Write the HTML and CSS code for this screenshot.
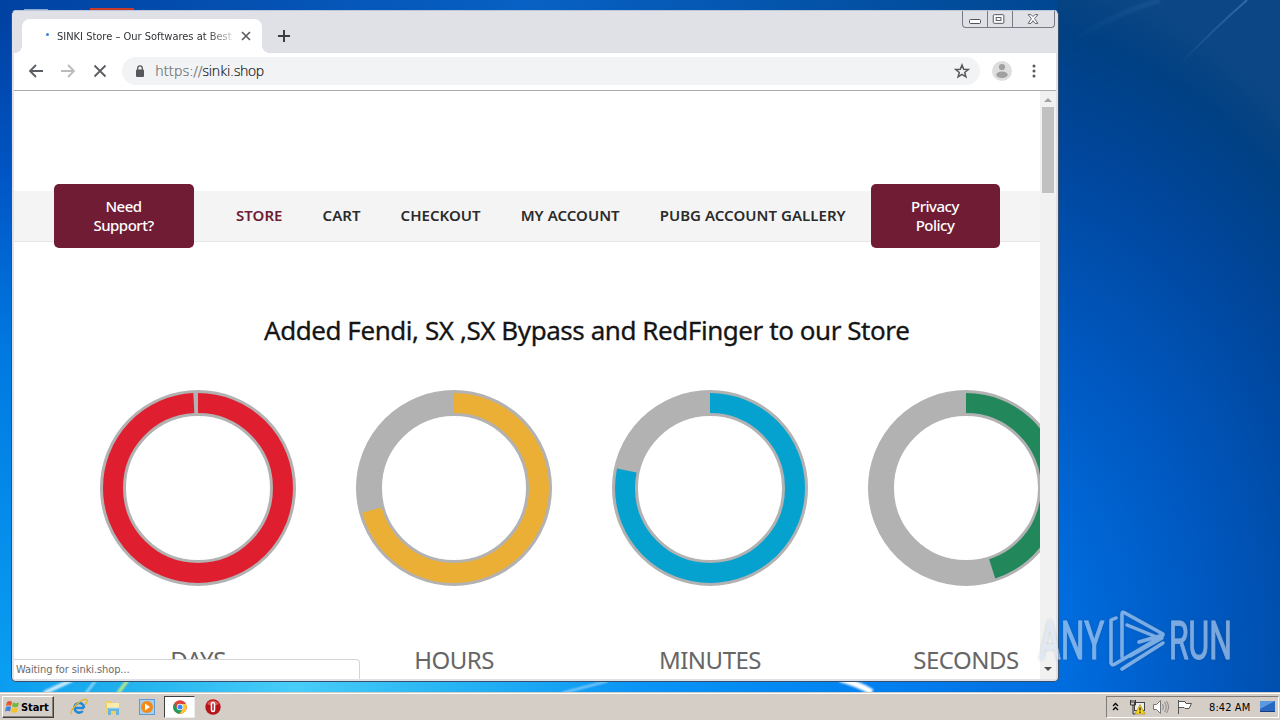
FILE: index.html
```html
<!DOCTYPE html>
<html lang="en">
<head>
  <meta charset="UTF-8">
  <title>SINKI Store – Our Softwares at Best</title>
  <link rel="stylesheet" href="styles.css">
</head>
<body>
  <div class="desktop">
    <svg class="wallpaper" width="1280" height="692" viewBox="0 0 1280 692">
      <defs>
        <linearGradient id="left" x1="0" y1="0" x2="0" y2="1">
          <stop offset="0" stop-color="#003f9f"/>
          <stop offset=".25" stop-color="#0055c4"/>
          <stop offset=".5" stop-color="#0078e0"/>
          <stop offset="1" stop-color="#0aa0f4"/>
        </linearGradient>
        <radialGradient id="right" gradientUnits="userSpaceOnUse" cx="0" cy="0" r="1" gradientTransform="translate(960 650) scale(520 690)">
          <stop offset="0" stop-color="#0080f2"/>
          <stop offset=".2" stop-color="#006ddf"/>
          <stop offset=".48" stop-color="#0058c0"/>
          <stop offset=".75" stop-color="#00469c"/>
          <stop offset=".92" stop-color="#004083"/>
          <stop offset="1.000" stop-color="#0c4684"/>
        </radialGradient>
        <linearGradient id="top">
          <stop offset="0" stop-color="#0042a2"/>
          <stop offset=".5" stop-color="#0861c4"/>
          <stop offset="1" stop-color="#004792"/>
        </linearGradient>
        <linearGradient id="bottom">
          <stop offset="0" stop-color="#0a9cf0"/>
          <stop offset=".12" stop-color="#22b2ee"/>
          <stop offset=".28" stop-color="#48cdf8"/>
          <stop offset=".42" stop-color="#28b5f3"/>
          <stop offset=".6" stop-color="#0a95f6"/>
          <stop offset=".83" stop-color="#0080f0"/>
          <stop offset="1" stop-color="#006ddf"/>
        </linearGradient>
        <linearGradient id="fade" x1="0" x2="1">
          <stop offset="0" stop-color="#5b9bd8" stop-opacity="0"/>
          <stop offset="1" stop-color="#5b9bd8" stop-opacity=".45"/>
        </linearGradient>
        <filter id="soft"><feGaussianBlur stdDeviation="1"/></filter>
      </defs>
      <rect width="1280" height="692" fill="url(#right)"/>
      <rect width="20" height="692" fill="url(#left)"/>
      <rect width="1058" height="12" fill="url(#top)"/>
      <rect y="680" width="1058" height="12" fill="url(#bottom)"/>
      <path d="M1180 64Q1215 28 1247 0" stroke="url(#fade)" stroke-width="2" fill="none"/>
      <path d="M1060 48Q1110 15 1160 0" stroke="url(#fade)" stroke-width="6" opacity=".3" fill="none" filter="url(#soft)"/>
      <g fill="none" stroke="#fff" filter="url(#soft)">
        <path d="M44 693l28-13" stroke-width="4" opacity=".8"/>
        <path d="M86 693l10-13" stroke-width="2" opacity=".7"/>
        <path d="M118 693l10-13" stroke="#c9ec7c" stroke-width="3"/>
        <path d="M562 693l46-12" stroke-width="1.5" opacity=".7"/>
        <path d="M840 679q16 4 32 13" stroke-width="6"/>
      </g>
      <rect x="90" y="8" width="44" height="3" fill="#c93a2b"/>
      <rect x="24" y="9" width="24" height="1" fill="#8ca9cf"/>
    </svg>

    <div class="window">
      <div class="tabstrip">
        <div class="tab">
          <span class="spinner"></span>
          <span class="tab-title">SINKI Store – Our Softwares at Best</span>
          <svg width="10" height="10" viewBox="0 0 10 10"><path d="M1 1l8 8M9 1l-8 8" stroke="#5a5d61" stroke-width="1.7"/></svg>
        </div>
        <svg class="new-tab" width="12" height="12" viewBox="0 0 12 12"><path d="M6 0v12M0 6h12" stroke="#3a3d41" stroke-width="2"/></svg>
        <div class="controls">
          <svg width="24" height="16" viewBox="0 0 24 16"><rect x="6.500" y="8.500" width="11" height="4" rx="1" fill="#fff" stroke="#50525c"/></svg>
          <svg width="25" height="16" viewBox="0 0 25 16"><rect x="5.500" y="3.500" width="11" height="9" rx="1" fill="#fff" stroke="#50525c"/><rect x="8.500" y="6.500" width="5" height="3" fill="none" stroke="#50525c"/></svg>
          <svg width="42" height="16" viewBox="0 0 42 16"><path d="M15.500 3.500h3l2 2 2-2h3l-3.400 4.200 3.400 4.800h-3l-2-2.800-2 2.800h-3l3.400-4.800z" fill="#fff" stroke="#62646d" stroke-width="1"/></svg>
        </div>
      </div>

      <div class="toolbar">
        <svg width="16" height="16" viewBox="0 0 16 16"><path d="M15 8H2M8 2L2 8l6 6" fill="none" stroke="#5a5d61" stroke-width="1.8"/></svg>
        <svg width="16" height="16" viewBox="0 0 16 16"><path d="M1 8h13M8 2l6 6-6 6" fill="none" stroke="#babbbd" stroke-width="1.800"/></svg>
        <svg width="16" height="16" viewBox="0 0 16 16"><path d="M2.500 2.500l11 11M13.500 2.500l-11 11" stroke="#5a5d61" stroke-width="1.800"/></svg>
        <div class="omnibox">
          <svg width="10" height="13" viewBox="0 0 10 13"><rect x="1" y="4.500" width="8" height="7.500" rx="1" fill="#55585c"/><path d="M2.700 5V3.200a2.300 2.300 0 0 1 4.600 0V5" fill="none" stroke="#55585c" stroke-width="1.300"/></svg>
          <span class="url"><span class="scheme">https://</span>sinki.shop</span>
          <svg width="16" height="16" viewBox="0 0 16 16"><path d="M8 2l1.700 4.200 4.500.3-3.500 2.900 1.200 4.400L8 11.400l-3.900 2.400 1.200-4.400L1.800 6.500l4.500-.3z" fill="none" stroke="#55585c" stroke-width="1.500"/></svg>
        </div>
        <svg class="avatar" width="20" height="20" viewBox="0 0 20 20"><circle cx="10" cy="10" r="10" fill="#dedede"/><circle cx="10" cy="6" r="3.100" fill="#a0a0a0"/><ellipse cx="10" cy="13.700" rx="5.700" ry="3.200" fill="#a0a0a0"/></svg>
        <svg class="menu" width="4" height="14" viewBox="0 0 4 14" fill="#55585c"><circle cx="2" cy="2" r="1.500"/><circle cx="2" cy="7" r="1.500"/><circle cx="2" cy="12" r="1.500"/></svg>
      </div>

      <div class="content">
        <div class="page">
          <div class="nav">
            <a class="button support">Need<br>Support?</a>
            <div class="links">
              <a class="active">STORE</a>
              <a>CART</a>
              <a>CHECKOUT</a>
              <a>MY ACCOUNT</a>
              <a>PUBG ACCOUNT GALLERY</a>
            </div>
            <a class="button privacy">Privacy<br>Policy</a>
          </div>

          <h1>Added Fendi, SX ,SX Bypass and RedFinger to our Store</h1>

          <div class="countdown">
            <div class="unit">
              <svg class="ring" width="196" height="196" viewBox="0 0 196 196"><circle class="track" cx="98" cy="98" r="85"/><circle class="bar days" cx="98" cy="98" r="85" pathLength="100" stroke-dasharray="99.200 100"/></svg>
              <span>DAYS</span>
            </div>
            <div class="unit">
              <svg class="ring" width="196" height="196" viewBox="0 0 196 196"><circle class="track" cx="98" cy="98" r="85"/><circle class="bar hours" cx="98" cy="98" r="85" pathLength="100" stroke-dasharray="70.800 100"/></svg>
              <span>HOURS</span>
            </div>
            <div class="unit">
              <svg class="ring" width="196" height="196" viewBox="0 0 196 196"><circle class="track" cx="98" cy="98" r="85"/><circle class="bar minutes" cx="98" cy="98" r="85" pathLength="100" stroke-dasharray="78.300 100"/></svg>
              <span>MINUTES</span>
            </div>
            <div class="unit">
              <svg class="ring" width="196" height="196" viewBox="0 0 196 196"><circle class="track" cx="98" cy="98" r="85"/><circle class="bar seconds" cx="98" cy="98" r="85" pathLength="100" stroke-dasharray="45 100"/></svg>
              <span>SECONDS</span>
            </div>
          </div>
        </div>
        <div class="scrollbar">
          <svg width="16" height="16" viewBox="0 0 16 16"><path d="M4 11l4-4 4 4z" fill="#a3a3a3"/></svg>
          <div class="thumb"></div>
          <svg class="down" width="16" height="16" viewBox="0 0 16 16"><path d="M4 4l4 4 4-4z" fill="#505050"/></svg>
        </div>
        <div class="status">Waiting for sinki.shop...</div>
      </div>
    </div>

    <svg class="watermark" width="220" height="76" viewBox="0 0 220 76">
      <defs>
        <filter id="shade"><feDropShadow dx="0" dy="0" stdDeviation="1.500" flood-color="#345" flood-opacity=".45"/></filter>
      </defs>
      <g filter="url(#shade)" opacity=".58">
        <text transform="translate(6 55) scale(.63 1)">ANY</text>
        <text transform="translate(136 55) scale(.6 1)">RUN</text>
        <path d="M83 14l-5 2v43q1 3 4 1l44-26-32-13M89 53V10q0-3 3-1l38 21-4 4M106 38l24-7M97 52l32-18M89 65l41-26"/>
      </g>
    </svg>
  </div>

  <div class="taskbar">
    <div class="start">
      <svg width="16" height="16" viewBox="0 0 16 16"><path d="M2 3q3-2 5 0L6 7Q4 5.500 1 7z" fill="#e5562b"/><path d="M8 3.300q3 2 6 0L13 7.500q-3 1.500-6 0z" fill="#74b83f"/><path d="M1 8q3-1.500 5 0l-1 4.500q-2-1.500-5 0z" fill="#3f84d6"/><path d="M7 8.500q3 1.500 6 0l-1 4.500q-3 1.500-6 0z" fill="#f7c228"/></svg>
      <span>Start</span>
    </div>
    <div class="launch">
      <svg width="18" height="18" viewBox="0 0 18 18"><path d="M14 10H5.500M14 10A4.800 4.800 0 1 0 12.800 13" fill="none" stroke="#2289d8" stroke-width="2.600"/><path d="M2 16Q-1 14 6 7t11-5q1 1-2 5" fill="none" stroke="#e5b62d" stroke-width="1.400"/></svg>
      <svg width="18" height="18" viewBox="0 0 18 18"><path d="M2 3h5l1 2h8v11H2z" fill="#f0cf68"/><path d="M3 5h12v5H3z" fill="#fbeda9"/><path d="M4 17v-7h11v7h-3v-4H7v4z" fill="#67b6df"/><path d="M5 10h9" stroke="#b5e1f4"/></svg>
      <svg width="18" height="18" viewBox="0 0 18 18"><rect x="1.500" y="1.500" width="15" height="15" fill="#a9cdef" stroke="#5e9bd6"/><circle cx="9" cy="9" r="6" fill="#f28a18"/><path d="M7 5.500l5 3.500-5 3.500z" fill="#fff"/></svg>
      <div class="running">
        <svg width="14" height="14" viewBox="0 0 14 14"><circle cx="7" cy="7" r="6.800" fill="#db4437"/><path d="M1 3.700A6.800 6.800 0 0 0 6.600 13.800L10 8.500H4z" fill="#209b58"/><path d="M13 4H7l3 4.700-3.400 5.100A6.800 6.800 0 0 0 13 4z" fill="#fbc92d"/><circle cx="7" cy="7" r="3.200" fill="#fff"/><circle cx="7" cy="7" r="2.500" fill="#4285f4"/></svg>
      </div>
      <svg width="18" height="18" viewBox="0 0 18 18"><circle cx="9" cy="9" r="7.700" fill="#b71318"/><path d="M3 6a7 7 0 0 1 12 0q-6 3-12 0" fill="#d95752"/><rect x="7.500" y="4.500" width="3" height="9" rx="1.500" fill="#a40f14" stroke="#fff" stroke-width="1.600"/></svg>
    </div>
    <div class="tray">
      <svg width="7" height="10" viewBox="0 0 7 10"><path d="M1 4l2.500-2.500L6 4M1 8l2.500-2.500L6 8" fill="none" stroke="#000" stroke-width="1.300"/></svg>
      <svg class="network" width="16" height="16" viewBox="0 0 16 16"><rect x="5.500" y="3.500" width="10" height="8" fill="#eee" stroke="#444"/><path d="M1.500 1v5h5V1M3 1v3M5 1v3M4 6v9h2" fill="none" stroke="#333"/><path d="M11 5.500l5 9.500H6z" fill="#f7d522" stroke="#a28500" stroke-width=".6"/><path d="M11 8.500v3M11 12.500v1.500" stroke="#222" stroke-width="1.300"/></svg>
      <svg class="volume" width="16" height="16" viewBox="0 0 16 16"><path d="M.5 5.500h3l4-4v13l-4-4h-3z" fill="#fff" stroke="#777"/><path d="M9.500 5q2 3 0 6M11.500 3q3.500 5 0 10M13.500 2q4 6 0 12" fill="none" stroke="#888"/></svg>
      <svg class="flag" width="16" height="16" viewBox="0 0 16 16"><path d="M1.500 1v14M1.500 2.500H8l1 2h5.500L12 9.500H8l-1-1H1.500z" fill="#fff" stroke="#555"/></svg>
      <span class="clock">8:42 AM</span>
      <svg width="15" height="12" viewBox="0 0 15 12"><path d="M0 0h15v11H0z" fill="#2868c1"/><path d="M0 0h15L0 8z" fill="#5b9ae1"/><path d="M0 10.500h15" stroke="#163c7b"/></svg>
    </div>
  </div>
</body>
</html>
```
FILE: styles.css
```css
* {
  box-sizing: border-box;
}

body {
  margin: 0;
  width: 1280px;
  height: 720px;
  overflow: hidden;
  font-family: "DejaVu Sans Condensed", "DejaVu Sans", sans-serif;
  font-stretch: condensed;
}

svg {
  display: block;
  flex: none;
}

.desktop {
  position: relative;
  height: 692px;
  overflow: hidden;
}

.wallpaper {
  position: absolute;
  top: 0;
  left: 0;
}

/* browser window */
.window {
  position: absolute;
  left: 11px;
  top: 10px;
  width: 1048px;
  height: 672px;
  display: flex;
  flex-direction: column;
  padding: 0 2px 2px;
  background: #dfe1e6;
  border: 1px solid #35506f;
  border-top-color: #b9c7d8;
  border-radius: 5px;
}

.tabstrip {
  height: 42px;
  display: flex;
  align-items: flex-start;
  padding: 0 1px 0 8px;
}

.tab {
  position: relative;
  width: 240px;
  height: 34px;
  margin-top: 8px;
  padding-right: 11px;
  background: #fff;
  border-radius: 8px 8px 0 0;
  display: flex;
  align-items: center;
}

.tab::before,
.tab::after {
  content: "";
  position: absolute;
  bottom: 0;
  width: 8px;
  height: 8px;
}

.tab::before {
  left: -8px;
  background: radial-gradient(circle at 0 0, transparent 8px, #fff 8px);
}

.tab::after {
  right: -8px;
  background: radial-gradient(circle at 100% 0, transparent 8px, #fff 8px);
}

.spinner {
  width: 3px;
  height: 3px;
  margin: 0 8px 4px 24px;
  border-radius: 50%;
  background: #3b82df;
}

.tab-title {
  width: 176px;
  margin-right: 8px;
  font-size: 11px;
  white-space: nowrap;
  overflow: hidden;
  color: #303336;
  -webkit-mask-image: linear-gradient(90deg, #000 150px, transparent 182px);
}

.new-tab {
  margin: 19px 0 0 16px;
}

.controls {
  display: flex;
  margin-left: auto;
  border: 1px solid #777b86;
  border-top: 0;
  border-radius: 0 0 4px 4px;
}

.controls svg + svg {
  border-left: 1px solid #777b86;
}

.toolbar {
  height: 38px;
  display: flex;
  align-items: center;
  gap: 16px;
  padding: 0 20px 1px 14px;
  background: #fff;
  border-bottom: 1px solid #a9abad;
}

.omnibox {
  flex: 1;
  height: 28px;
  margin-left: -2px;
  padding: 0 10px 0 13px;
  display: flex;
  align-items: center;
  border-radius: 14px;
  background: #f1f3f4;
}

.url {
  flex: 1;
  margin-left: 10px;
  font-family: "DejaVu Sans", sans-serif;
  font-stretch: condensed;
  font-weight: 200;
  font-size: 14px;
  letter-spacing: -0.85px;
  color: #101114;
  -webkit-text-stroke: 0.2px;
}

.scheme {
  letter-spacing: -0.4px;
  color: #66696d;
}

.avatar {
  margin-left: -4px;
}

.menu {
  margin-left: 4px;
}

.content {
  position: relative;
  flex: 1;
  display: flex;
  overflow: hidden;
  background: #fff;
}

.page {
  width: 1026px;
  height: 588px;
  padding-top: 100px;
  overflow: hidden;
  font-family: "Noto Sans", sans-serif;
  font-stretch: normal;
}

/* site menu */
.nav {
  height: 51px;
  display: flex;
  align-items: center;
  padding-left: 40px;
  background: #f4f4f4;
  border-bottom: 1px solid #e6e6e6;
}

.button {
  height: 64px;
  padding-top: 13px;
  border-radius: 5px;
  background: #6f1c34;
  color: #fff;
  font-size: 15px;
  font-weight: 500;
  line-height: 19px;
  letter-spacing: -0.5px;
  text-align: center;
}

.support {
  width: 140px;
  padding-right: 1px;
}

.privacy {
  width: 129px;
  padding-right: 1px;
}

.links {
  display: flex;
  gap: 40px;
  width: 677px;
  padding: 0 0 2px 42px;
  font-size: 15px;
  font-weight: 600;
  letter-spacing: 0.04px;
  color: #2b2b2b;
  white-space: nowrap;
}

.links .active {
  color: #6f1c34;
}

h1 {
  margin: 68px 0 0 250px;
  font-size: 26px;
  font-weight: 400;
  line-height: 40px;
  letter-spacing: -0.44px;
  white-space: nowrap;
  color: #151515;
  -webkit-text-stroke: 0.3px;
}

.countdown {
  display: flex;
  width: 1024px;
  margin: 40px 0 0 56px;
}

.unit {
  flex: 0 0 256px;
  display: flex;
  flex-direction: column;
  align-items: center;
  font-size: 24px;
  line-height: 32px;
  letter-spacing: -0.5px;
  color: #666;
}

.unit span {
  margin-top: 58px;
}

.ring circle {
  fill: none;
}

.track {
  stroke: #b2b2b2;
  stroke-width: 26;
}

.bar {
  stroke-width: 20;
  transform: rotate(-90deg);
  transform-origin: 98px 98px;
}

.days { stroke: #df1f2f; }
.hours { stroke: #ebaf36; }
.minutes { stroke: #06a2cf; }
.seconds { stroke: #22885b; }

.scrollbar {
  width: 16px;
  display: flex;
  flex-direction: column;
  background: #f1f1f1;
}

.thumb {
  width: 12px;
  height: 86px;
  margin-left: 2px;
  background: #c1c1c1;
}

.scrollbar .down {
  margin-top: auto;
}

.status {
  position: absolute;
  left: 0;
  bottom: 0;
  width: 346px;
  height: 20px;
  padding-left: 2px;
  background: #fff;
  border: 1px solid #d5d5d5;
  border-width: 1px 1px 0 0;
  border-radius: 0 4px 0 0;
  font-size: 11px;
  line-height: 19px;
  letter-spacing: -0.1px;
  color: #6b6b6b;
}

.watermark {
  position: absolute;
  left: 1033px;
  top: 604px;
}

.watermark text {
  font-family: Roboto, sans-serif;
  font-size: 53px;
  font-stretch: normal;
  fill: #d5e4f5;
  stroke: #d5e4f5;
  stroke-width: 1;
}

.watermark path {
  fill: none;
  stroke: #d5e4f5;
  stroke-width: 3.500;
  stroke-linecap: round;
  stroke-linejoin: round;
}

/* taskbar */
.taskbar {
  height: 28px;
  display: flex;
  align-items: center;
  padding: 1px 1px 0 2px;
  background: #d5cec7;
  border-top: 1px solid #d5cec7;
  box-shadow: inset 0 1px #fff;
}

.start {
  width: 52px;
  height: 22px;
  display: flex;
  align-items: center;
  padding-left: 2px;
  border: 1px solid;
  border-color: #fff #404040 #404040 #fff;
  box-shadow: inset -1px -1px #858079;
  font-size: 11px;
  font-weight: bold;
  letter-spacing: -0.1px;
}

.launch {
  display: flex;
  align-items: center;
  gap: 16px;
  margin-left: 16px;
}

.running {
  width: 31px;
  height: 22px;
  margin: 0 -7px 0 -8px;
  display: flex;
  align-items: center;
  justify-content: center;
  background: #fff;
  border: 1px solid;
  border-color: #404040 #eee #eee #404040;
}

.tray {
  width: 173px;
  height: 22px;
  margin-left: auto;
  padding-left: 5px;
  display: flex;
  align-items: center;
  border: 1px solid;
  border-color: #807b75 #fff #fff #807b75;
  font-size: 11px;
}

.network {
  margin-left: 10px;
}

.volume,
.flag {
  margin-left: 8px;
}

.clock {
  width: 42px;
  margin: 0 9px 0 16px;
  letter-spacing: 0.1px;
  white-space: nowrap;
}
```
